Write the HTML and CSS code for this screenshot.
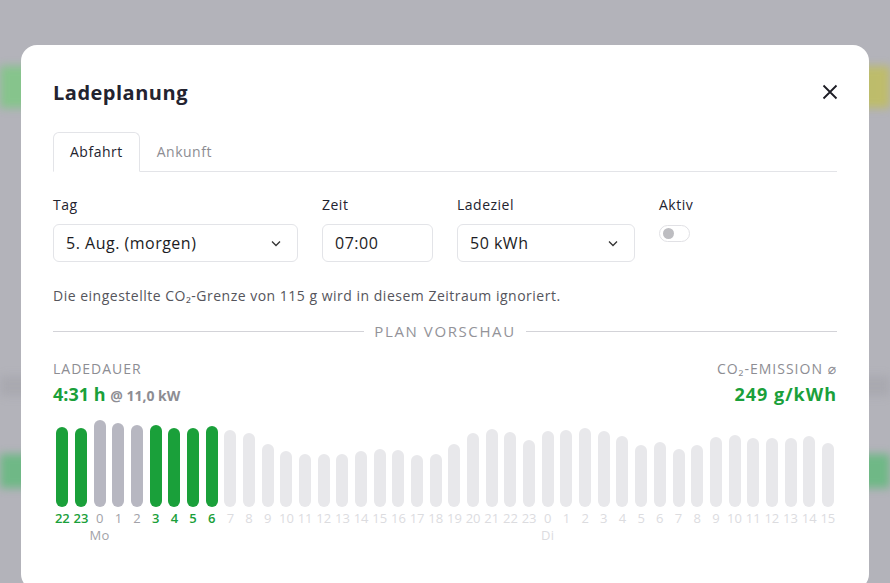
FILE: index.html
```html
<!DOCTYPE html>
<html lang="de">

<head>
  <meta charset="UTF-8">
  <meta name="viewport" content="width=device-width, initial-scale=1.0">
  <title>Ladeplanung</title>
  <link rel="stylesheet" href="styles.css">
</head>

<body>
  <div class="page">
    <div class="page-bar top"></div>
    <div class="page-line"></div>
    <div class="page-bar bottom"></div>
  </div>

  <div class="modal-backdrop">
    <div class="modal">
      <div class="modal-header">
        <h5 class="modal-title">Ladeplanung</h5>
        <button class="btn-close" aria-label="Schließen">
          <svg width="16" height="16" viewBox="0 0 16 16">
            <path d="M1.5 1.5 L14.5 14.5 M14.5 1.5 L1.5 14.5" stroke="#1c1c24" stroke-width="1.8" fill="none" />
          </svg>
        </button>
      </div>

      <ul class="nav-tabs">
        <li class="tab active">Abfahrt</li>
        <li class="tab">Ankunft</li>
      </ul>

      <div class="form-row">
        <div class="field field-day">
          <label>Tag</label>
          <div class="select">5. Aug. (morgen)
            <svg class="chevron" width="10" height="7" viewBox="0 0 10 7">
              <path d="M1 1.5 L5 5.5 L9 1.5" stroke="#333" stroke-width="1.3" fill="none" />
            </svg>
          </div>
        </div>
        <div class="field field-time">
          <label>Zeit</label>
          <div class="input">07:00</div>
        </div>
        <div class="field field-target">
          <label>Ladeziel</label>
          <div class="select">50 kWh
            <svg class="chevron" width="10" height="7" viewBox="0 0 10 7">
              <path d="M1 1.5 L5 5.5 L9 1.5" stroke="#333" stroke-width="1.3" fill="none" />
            </svg>
          </div>
        </div>
        <div class="field field-active">
          <label>Aktiv</label>
          <div class="switch"><span class="knob"></span></div>
        </div>
      </div>

      <p class="hint">Die eingestellte CO₂-Grenze von 115 g wird in diesem Zeitraum ignoriert.</p>

      <div class="divider"><span>PLAN VORSCHAU</span></div>

      <div class="summary">
        <div>
          <div class="caption">LADEDAUER</div>
          <div class="value">4:31 h <small>@ 11,0 kW</small></div>
        </div>
        <div class="right">
          <div class="caption">CO₂-EMISSION ⌀</div>
          <div class="value wide">249 g/kWh</div>
        </div>
      </div>

      <div class="chart">
        <div class="slot charging"><div class="bar" style="height:80px"></div><div class="hour">22</div></div>
        <div class="slot charging"><div class="bar" style="height:79px"></div><div class="hour">23</div></div>
        <div class="slot past"><div class="bar" style="height:87px"></div><div class="hour">0</div><div class="day">Mo</div></div>
        <div class="slot past"><div class="bar" style="height:84px"></div><div class="hour">1</div></div>
        <div class="slot past"><div class="bar" style="height:82px"></div><div class="hour">2</div></div>
        <div class="slot charging"><div class="bar" style="height:82px"></div><div class="hour">3</div></div>
        <div class="slot charging"><div class="bar" style="height:79px"></div><div class="hour">4</div></div>
        <div class="slot charging"><div class="bar" style="height:79px"></div><div class="hour">5</div></div>
        <div class="slot charging"><div class="bar" style="height:81px"></div><div class="hour">6</div></div>
        <div class="slot"><div class="bar" style="height:77px"></div><div class="hour">7</div></div>
        <div class="slot"><div class="bar" style="height:74px"></div><div class="hour">8</div></div>
        <div class="slot"><div class="bar" style="height:63px"></div><div class="hour">9</div></div>
        <div class="slot"><div class="bar" style="height:56px"></div><div class="hour">10</div></div>
        <div class="slot"><div class="bar" style="height:53px"></div><div class="hour">11</div></div>
        <div class="slot"><div class="bar" style="height:53px"></div><div class="hour">12</div></div>
        <div class="slot"><div class="bar" style="height:53px"></div><div class="hour">13</div></div>
        <div class="slot"><div class="bar" style="height:56px"></div><div class="hour">14</div></div>
        <div class="slot"><div class="bar" style="height:58px"></div><div class="hour">15</div></div>
        <div class="slot"><div class="bar" style="height:57px"></div><div class="hour">16</div></div>
        <div class="slot"><div class="bar" style="height:52px"></div><div class="hour">17</div></div>
        <div class="slot"><div class="bar" style="height:53px"></div><div class="hour">18</div></div>
        <div class="slot"><div class="bar" style="height:63px"></div><div class="hour">19</div></div>
        <div class="slot"><div class="bar" style="height:74px"></div><div class="hour">20</div></div>
        <div class="slot"><div class="bar" style="height:78px"></div><div class="hour">21</div></div>
        <div class="slot"><div class="bar" style="height:75px"></div><div class="hour">22</div></div>
        <div class="slot"><div class="bar" style="height:67px"></div><div class="hour">23</div></div>
        <div class="slot"><div class="bar" style="height:76px"></div><div class="hour">0</div><div class="day">Di</div></div>
        <div class="slot"><div class="bar" style="height:77px"></div><div class="hour">1</div></div>
        <div class="slot"><div class="bar" style="height:79px"></div><div class="hour">2</div></div>
        <div class="slot"><div class="bar" style="height:76px"></div><div class="hour">3</div></div>
        <div class="slot"><div class="bar" style="height:71px"></div><div class="hour">4</div></div>
        <div class="slot"><div class="bar" style="height:62px"></div><div class="hour">5</div></div>
        <div class="slot"><div class="bar" style="height:65px"></div><div class="hour">6</div></div>
        <div class="slot"><div class="bar" style="height:58px"></div><div class="hour">7</div></div>
        <div class="slot"><div class="bar" style="height:62px"></div><div class="hour">8</div></div>
        <div class="slot"><div class="bar" style="height:70px"></div><div class="hour">9</div></div>
        <div class="slot"><div class="bar" style="height:72px"></div><div class="hour">10</div></div>
        <div class="slot"><div class="bar" style="height:69px"></div><div class="hour">11</div></div>
        <div class="slot"><div class="bar" style="height:69px"></div><div class="hour">12</div></div>
        <div class="slot"><div class="bar" style="height:69px"></div><div class="hour">13</div></div>
        <div class="slot"><div class="bar" style="height:71px"></div><div class="hour">14</div></div>
        <div class="slot"><div class="bar" style="height:64px"></div><div class="hour">15</div></div>
      </div>
    </div>
  </div>
</body>

</html>
```

FILE: styles.css
```css
body {
  margin: 0;
  font-family: 'Open Sans', 'DejaVu Sans', sans-serif;
  letter-spacing: 0.5px;
  color: #28282f;
  background-color: #b3b3ba;
  overflow: hidden;
}

/* blurred page behind the dialog */
.page {
  height: 583px;
  padding-top: 66px;
  box-sizing: border-box;
  filter: blur(4px);
}

.page-bar {
  height: 42px;
}

.page-bar.top {
  background: linear-gradient(90deg, #86c48c 0%, #8fc48a 50%, #bfbc6a 100%);
}

.page-line {
  height: 20px;
  margin-top: 268px;
  background-color: #a9a9b0;
}

.page-bar.bottom {
  margin-top: 58px;
  height: 34px;
  background-color: #6fb886;
}

.modal-backdrop {
  position: fixed;
  inset: 0;
  padding-top: 45px;
}

.modal {
  width: 848px;
  height: 545px;
  margin: 0 auto;
  background-color: #ffffff;
  border-radius: 16px;
  padding: 31px 32px 0;
  box-sizing: border-box;
}

.modal-header {
  display: flex;
  justify-content: space-between;
  align-items: center;
  height: 32px;
}

.modal-title {
  margin: 0;
  font-size: 20px;
  font-weight: 700;
  color: #23232f;
}

.btn-close {
  border: none;
  background: none;
  padding: 0;
  margin-right: -1px;
  width: 16px;
  height: 16px;
  cursor: pointer;
}

.nav-tabs {
  display: flex;
  list-style: none;
  margin: 24px 0 0;
  padding: 0;
  border-bottom: 1px solid #e3e4e8;
}

.tab {
  padding: 0 16px;
  height: 38px;
  line-height: 38px;
  font-size: 14px;
  color: #8d8d93;
  border: 1px solid transparent;
  border-radius: 6px 6px 0 0;
  margin-bottom: -1px;
}

.tab.active {
  color: #23232f;
  background-color: #fff;
  border-color: #e3e4e8 #e3e4e8 #fff;
}

.form-row {
  display: flex;
  gap: 24px;
  margin-top: 23px;
}

.field label {
  display: block;
  font-size: 14px;
  line-height: 20px;
  margin-bottom: 9px;
  color: #23232f;
}

.field-day { width: 245px; }
.field-time { width: 111px; }
.field-target { width: 178px; }

.select,
.input {
  display: flex;
  align-items: center;
  justify-content: space-between;
  height: 38px;
  padding: 0 16px 0 12px;
  border: 1px solid #e3e4e8;
  border-radius: 6px;
  font-size: 16px;
  box-sizing: border-box;
  color: #1c1c24;
}

.switch {
  width: 31px;
  height: 17px;
  margin-top: 10px;
  border: 1px solid #e1e1e5;
  border-radius: 9px;
  box-sizing: border-box;
  display: flex;
  align-items: center;
  padding-left: 3px;
}

.knob {
  width: 11px;
  height: 11px;
  border-radius: 50%;
  background-color: #bdbdc1;
}

.hint {
  margin: 24px 0 0;
  font-size: 14px;
  line-height: 20px;
  color: #55555c;
}

.divider {
  display: flex;
  align-items: center;
  gap: 10px;
  margin-top: 15px;
  font-size: 15px;
  line-height: 20px;
  color: #939399;
  letter-spacing: 1.6px;
}

.divider::before,
.divider::after {
  content: '';
  flex: 1;
  border-top: 1px solid #d3d3d8;
}

.summary {
  display: flex;
  justify-content: space-between;
  margin-top: 18px;
}

.summary .right {
  text-align: right;
}

.caption {
  font-size: 14px;
  line-height: 20px;
  color: #8d8d93;
  letter-spacing: 1px;
}

.value {
  margin-top: 3px;
  font-size: 18px;
  line-height: 24px;
  font-weight: 700;
  color: #1aa03a;
  letter-spacing: 0;
}

.value.wide {
  letter-spacing: 1px;
}

.value small {
  font-size: 14px;
  color: #8d8d93;
}

.chart {
  display: flex;
  align-items: flex-end;
  margin-top: 10px;
  height: 89px;
}

.slot {
  flex: 1;
  display: flex;
  flex-direction: column;
  align-items: center;
  justify-content: flex-end;
  position: relative;
  height: 89px;
}

.bar {
  width: 12px;
  border-radius: 6px;
  background-color: #e8e8eb;
}

.hour {
  position: absolute;
  top: 92px;
  font-size: 13px;
  line-height: 16px;
  letter-spacing: 0;
  color: #dcdcdf;
}

.day {
  position: absolute;
  top: 109px;
  font-size: 13px;
  line-height: 16px;
  color: #dcdcdf;
}

.slot.charging .bar {
  background-color: #1aa03a;
}

.slot.charging .hour {
  color: #1aa03a;
  font-weight: 600;
}

.slot.past .bar {
  background-color: #b7b7c1;
}

.slot.past .hour,
.slot.past .day {
  color: #a2a2a8;
}
```
